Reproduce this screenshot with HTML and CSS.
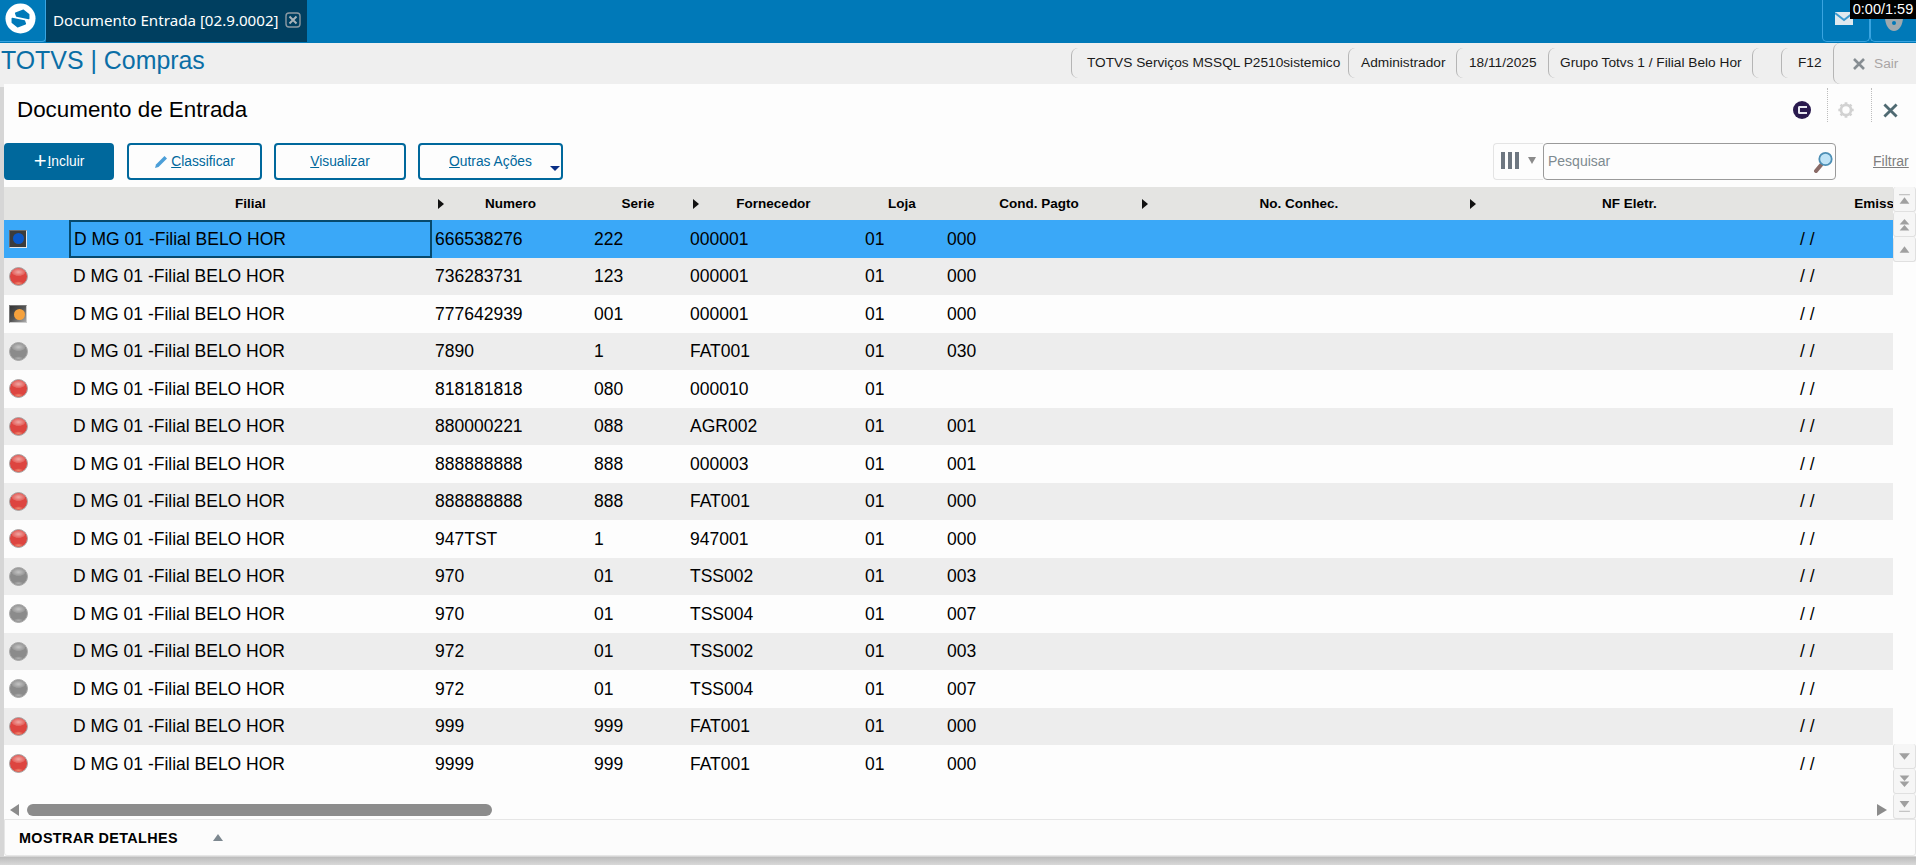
FILE: index.html
```html
<!DOCTYPE html>
<html lang="pt-BR">
<head>
<meta charset="utf-8">
<title>Documento de Entrada</title>
<link rel="stylesheet" href="styles.css">
</head>
<body>
<header class="topbar">
  <div class="logo-box">
    <svg class="logo" viewBox="0 0 32 32"><circle cx="16" cy="16" r="15.5" fill="#fff"/><path d="M11 10.5 L19 7.5 L24.5 12 L24.5 16 L12 13.5 Z" fill="#0079b8" stroke="#0079b8" stroke-width="1.5" stroke-linejoin="round"/><path d="M7.5 16 L20 18.5 L21 21.5 L13 24.5 L7.5 20 Z" fill="#0079b8" stroke="#0079b8" stroke-width="1.5" stroke-linejoin="round"/></svg>
  </div>
  <div class="tab">
    <span class="tab-title">Documento Entrada [02.9.0002]</span>
    <svg class="tab-close" viewBox="0 0 16 16"><rect x="1" y="1" width="14" height="14" rx="3" fill="none" stroke="#8d9aa3" stroke-width="1.4"/><path d="M4.5 4.5 L11.5 11.5 M11.5 4.5 L4.5 11.5" stroke="#a9b4ba" stroke-width="2"/></svg>
  </div>
  <div class="top-actions">
    <div class="top-btn"><svg class="mail" viewBox="0 0 18 13"><rect width="18" height="13" fill="#dfe9ef"/><path d="M0 1 L9 8 L18 1" fill="none" stroke="#3b9ad0" stroke-width="2"/></svg></div>
    <div class="top-btn top-btn-last"><svg class="shield" viewBox="0 0 18 14"><path d="M0 0 H18 C18 8 14 14 9 14 C4 14 0 8 0 0 Z" fill="#9fa9ae"/><circle cx="9" cy="6" r="2" fill="#0079b8"/></svg></div>
  </div>
  <div class="timer">0:00/1:59</div>
</header>

<div class="statusbar">
  <div class="brand">TOTVS | <span>Compras</span></div>
  <div class="st-group">
    <div class="st st-first">TOTVS Serviços MSSQL P2510sistemico</div>
    <div class="st st-admin">Administrador</div>
    <div class="st st-date">18/11/2025</div>
    <div class="st st-group4">Grupo Totvs 1 / Filial Belo Hor</div>
    <div class="st st-empty"></div>
    <div class="st st-f12">F12</div>
    <div class="st st-exit"><svg class="exit-x" viewBox="0 0 12 12"><path d="M1 1 L11 11 M11 1 L1 11" stroke="#868d92" stroke-width="2.6"/></svg><span>Sair</span></div>
  </div>
</div>

<main class="panel">
  <div class="title-row">
    <h1 class="title">Documento de Entrada</h1>
    <div class="title-tools">
      <div class="tool tool-c"><span class="c-badge"><i></i></span></div>
      <div class="tool tool-sep tool-gear">
        <svg class="gear" viewBox="0 0 20 20"><circle cx="10" cy="10" r="5.6" fill="none" stroke="#d2d2d2" stroke-width="3"/><path d="M10 1.5 V4 M10 16 V18.5 M1.5 10 H4 M16 10 H18.5 M4 4 L5.8 5.8 M14.2 14.2 L16 16 M16 4 L14.2 5.8 M5.8 14.2 L4 16" stroke="#d2d2d2" stroke-width="3"/></svg>
      </div>
      <div class="tool tool-sep tool-close">
        <svg class="panel-x" viewBox="0 0 16 16"><path d="M1.5 1.5 L14.5 14.5 M14.5 1.5 L1.5 14.5" stroke="#4f6a72" stroke-width="3"/></svg>
      </div>
    </div>
  </div>

  <div class="toolbar">
    <button class="btn btn-primary"><b class="plus">+</b><span><u>I</u>ncluir</span></button>
    <button class="btn btn-classify"><svg class="pencil" viewBox="0 0 14 14"><path d="M1 13 L2 9.5 L10.5 1 L13 3.5 L4.5 12 Z" fill="#4c9fd8"/></svg><span><u>C</u>lassificar</span></button>
    <button class="btn btn-view"><span><u>V</u>isualizar</span></button>
    <button class="btn btn-more"><span><u>O</u>utras Ações</span><i class="caret"></i></button>
    <div class="search-area">
      <div class="col-picker"><i class="bars"></i><i class="bars"></i><i class="bars"></i><i class="tri-down"></i></div>
      <div class="search">
        <span class="placeholder">Pesquisar</span>
        <svg class="lens" viewBox="0 0 20 22"><path d="M3 20 L8 14" stroke="#8a6a66" stroke-width="4" stroke-linecap="round"/><circle cx="12.5" cy="8" r="6.2" fill="#bfe3f6" stroke="#4d8fb5" stroke-width="1.8"/></svg>
      </div>
      <a class="filter">Filtrar</a>
    </div>
  </div>

  <div class="browse">
    <div class="grid">
      <div class="row head">
        <div></div><div>Filial</div>
        <div><i class="sort"></i>Numero</div><div>Serie</div>
        <div><i class="sort"></i>Fornecedor</div><div>Loja</div><div>Cond. Pagto</div>
        <div><i class="sort"></i>No. Conhec.</div><div><i class="sort"></i>NF Eletr.</div><div>Emissão</div>
      </div>
      <div class="row selected"><div><span class="sq sq-blue"><i></i></span></div><div class="cell-focus">D MG 01 -Filial BELO HOR</div><div>666538276</div><div>222</div><div>000001</div><div>01</div><div>000</div><div></div><div></div><div>/ /</div></div>
      <div class="row alt"><div><span class="ball red"></span></div><div>D MG 01 -Filial BELO HOR</div><div>736283731</div><div>123</div><div>000001</div><div>01</div><div>000</div><div></div><div></div><div>/ /</div></div>
      <div class="row"><div><span class="sq sq-orange"><i></i></span></div><div>D MG 01 -Filial BELO HOR</div><div>777642939</div><div>001</div><div>000001</div><div>01</div><div>000</div><div></div><div></div><div>/ /</div></div>
      <div class="row alt"><div><span class="ball gray"></span></div><div>D MG 01 -Filial BELO HOR</div><div>7890</div><div>1</div><div>FAT001</div><div>01</div><div>030</div><div></div><div></div><div>/ /</div></div>
      <div class="row"><div><span class="ball red"></span></div><div>D MG 01 -Filial BELO HOR</div><div>818181818</div><div>080</div><div>000010</div><div>01</div><div></div><div></div><div></div><div>/ /</div></div>
      <div class="row alt"><div><span class="ball red"></span></div><div>D MG 01 -Filial BELO HOR</div><div>880000221</div><div>088</div><div>AGR002</div><div>01</div><div>001</div><div></div><div></div><div>/ /</div></div>
      <div class="row"><div><span class="ball red"></span></div><div>D MG 01 -Filial BELO HOR</div><div>888888888</div><div>888</div><div>000003</div><div>01</div><div>001</div><div></div><div></div><div>/ /</div></div>
      <div class="row alt"><div><span class="ball red"></span></div><div>D MG 01 -Filial BELO HOR</div><div>888888888</div><div>888</div><div>FAT001</div><div>01</div><div>000</div><div></div><div></div><div>/ /</div></div>
      <div class="row"><div><span class="ball red"></span></div><div>D MG 01 -Filial BELO HOR</div><div>947TST</div><div>1</div><div>947001</div><div>01</div><div>000</div><div></div><div></div><div>/ /</div></div>
      <div class="row alt"><div><span class="ball gray"></span></div><div>D MG 01 -Filial BELO HOR</div><div>970</div><div>01</div><div>TSS002</div><div>01</div><div>003</div><div></div><div></div><div>/ /</div></div>
      <div class="row"><div><span class="ball gray"></span></div><div>D MG 01 -Filial BELO HOR</div><div>970</div><div>01</div><div>TSS004</div><div>01</div><div>007</div><div></div><div></div><div>/ /</div></div>
      <div class="row alt"><div><span class="ball gray"></span></div><div>D MG 01 -Filial BELO HOR</div><div>972</div><div>01</div><div>TSS002</div><div>01</div><div>003</div><div></div><div></div><div>/ /</div></div>
      <div class="row"><div><span class="ball gray"></span></div><div>D MG 01 -Filial BELO HOR</div><div>972</div><div>01</div><div>TSS004</div><div>01</div><div>007</div><div></div><div></div><div>/ /</div></div>
      <div class="row alt"><div><span class="ball red"></span></div><div>D MG 01 -Filial BELO HOR</div><div>999</div><div>999</div><div>FAT001</div><div>01</div><div>000</div><div></div><div></div><div>/ /</div></div>
      <div class="row"><div><span class="ball red"></span></div><div>D MG 01 -Filial BELO HOR</div><div>9999</div><div>999</div><div>FAT001</div><div>01</div><div>000</div><div></div><div></div><div>/ /</div></div>
      <div class="hscroll">
        <i class="arrow-left"></i>
        <div class="thumb"></div>
        <i class="arrow-right"></i>
      </div>
    </div>
    <div class="vscroll">
      <div class="vgroup">
        <div class="vbtn"><svg viewBox="0 0 12 12"><path d="M1 1.5 H11" stroke="#c4c4c4" stroke-width="1.2"/><path d="M1.5 10 L6 4 L10.5 10 Z" fill="#a0a0a0"/></svg></div>
        <div class="vbtn"><svg viewBox="0 0 12 12"><path d="M1.5 6 L6 1 L10.5 6 Z M1.5 11.5 L6 6.5 L10.5 11.5 Z" fill="#a0a0a0"/></svg></div>
        <div class="vbtn"><svg viewBox="0 0 12 12"><path d="M1.5 9 L6 3 L10.5 9 Z" fill="#a0a0a0"/></svg></div>
      </div>
      <div class="vgroup">
        <div class="vbtn"><svg viewBox="0 0 12 12"><path d="M1 3 L11 3 L6 9 Z" fill="#a0a0a0"/></svg></div>
        <div class="vbtn"><svg viewBox="0 0 12 12"><path d="M1.5 .5 L10.5 .5 L6 5.5 Z M1.5 6 L10.5 6 L6 11 Z" fill="#a0a0a0"/></svg></div>
        <div class="vbtn"><svg viewBox="0 0 12 12"><path d="M1.5 1 L10.5 1 L6 7 Z" fill="#a0a0a0"/><path d="M1 10.5 H11" stroke="#c4c4c4" stroke-width="1.2"/></svg></div>
      </div>
    </div>
  </div>

  <div class="details"><strong>MOSTRAR DETALHES</strong><i class="tri-up"></i></div>
</main>
</body>
</html>
```
FILE: styles.css
```css
* { box-sizing: border-box; }
html, body { margin: 0; height: 865px; overflow: hidden; }
body {
  width: 1916px;
  display: flex;
  flex-direction: column;
  font-family: "Liberation Sans", Arial, sans-serif;
  background: linear-gradient(#efefef 0, #efefef 856px, #bcbcbc 857px, #d8d8d8 865px);
  color: #000;
}

/* top bar */
.topbar { position: relative; flex: 0 0 43px; display: flex; background: #0079b8; }
.logo-box {
  width: 46px; height: 42px; display: flex; align-items: flex-start; justify-content: center;
  padding-top: 3px; padding-right: 5px;
  border-right: 1px solid #3aa4e0; border-bottom: 1px solid #3aa4e0; border-bottom-right-radius: 4px;
}
.logo { width: 31px; height: 31px; }
.tab {
  width: 261px; height: 42px; background: #003f60; display: flex; align-items: center;
  padding: 0 0 2px 7px; gap: 6px;
}
.tab-title { font-family: "Noto Sans", sans-serif; font-size: 15.15px; color: #fff; white-space: nowrap; }
.tab-close { width: 16px; height: 16px; flex: none; }
.top-actions { margin-left: auto; display: flex; }
.top-btn {
  width: 48px; height: 42px; border: 1px solid #3aa4e0; border-top: 0; border-radius: 0 0 5px 5px;
  display: flex; justify-content: center; padding-top: 12px;
}
.top-btn-last { width: 46px; border-right: 0; border-radius: 0 0 0 5px; }
.mail { width: 18px; height: 13px; margin-right: 5px; }
.shield { width: 18px; height: 14px; margin-top: 5px; }
.timer {
  position: absolute; right: 0; top: 0; width: 66px; height: 19px; background: #000; color: #fff;
  font-size: 14.5px; line-height: 19px; text-align: center; white-space: nowrap;
}

/* status bar */
.statusbar { flex: 0 0 41px; display: flex; align-items: center; background: #efefef; position: relative; }
.brand { font-size: 24.9px; color: #0a6ea6; padding-left: 1px; white-space: nowrap; padding-bottom: 7px; }
.brand span { color: #0a6ea6; }
.st-group { margin-left: auto; display: flex; align-items: center; height: 41px; }
.st {
  height: 30px; line-height: 30px; padding: 0 12px; font-size: 13.7px; color: #1a1a1a; white-space: nowrap;
  border-left: 1px solid #b5b5b5; border-radius: 7px 0 0 7px; margin-top: -1px;
}
.st-first { padding: 0 0 0 15px; width: 277px; }
.st-admin { width: 108px; padding-right: 0; }
.st-date { width: 92px; padding-right: 0; }
.st-group4 { padding: 0 0 0 11px; width: 204px; }
.st-empty { width: 29px; padding: 0; }
.st-f12 { width: 52px; padding: 0 0 0 16px; }
.st-exit {
  width: 83px; height: 41px; line-height: 41px; margin-top: 0; padding: 0 0 0 19px; color: #aaa5a5;
  display: flex; align-items: center; gap: 9px;
}
.exit-x { width: 12px; height: 12px; }

/* panel */
.panel { flex: 1; margin-left: 4px; display: flex; flex-direction: column; background: #fdfdfd; position: relative; margin-bottom: 9px; }
.panel::before { content: ""; position: absolute; left: -4px; top: 3px; bottom: 0; width: 4px; background: #d6d6d6; }
.title-row { flex: 0 0 59px; display: flex; align-items: flex-start; justify-content: space-between; }
.title { margin: 13px 0 0 13px; font-size: 22.4px; font-weight: 400; line-height: 26px; }
.title-tools { display: flex; margin-top: 4px; height: 34px; }
.tool { display: flex; align-items: center; justify-content: center; padding-top: 10px; }
.tool-c { width: 40px; padding-right: 16px; justify-content: flex-end; }
.tool-sep { border-left: 1px dotted #bdbdbd; }
.tool-gear { width: 44px; padding-right: 8px; }
.tool-close { width: 45px; padding-right: 7px; }
.c-badge { width: 18px; height: 18px; border-radius: 50%; background: #2a1a4e; position: relative; display: block; }
.c-badge i { position: absolute; left: 5px; top: 5px; width: 9px; height: 8px; border: 2px solid #e8e8f0; border-right: 0; border-radius: 2px 0 0 2px; }
.gear { width: 18px; height: 18px; }
.panel-x { width: 15px; height: 15px; }

.toolbar { flex: 0 0 37px; display: flex; margin-bottom: 7px; }
.btn {
  height: 37px; border: 2px solid #00689c; border-radius: 4px; background: #fdfdfd; color: #00689c;
  font: 13.8px "Liberation Sans", Arial, sans-serif; padding: 0; display: flex; align-items: center; justify-content: center;
  position: relative;
}
.btn u { text-decoration: underline; }
.btn-primary { width: 110px; background: #00689c; color: #fff; gap: 1px; }
.plus { font-size: 22px; font-weight: 400; line-height: 20px; margin-top: -2px; }
.btn-classify { width: 135px; margin-left: 13px; gap: 3px; }
.pencil { width: 14px; height: 14px; }
.btn-view { width: 132px; margin-left: 12px; }
.btn-more { width: 145px; margin-left: 12px; }
.caret {
  position: absolute; right: 1px; bottom: 7px; width: 0; height: 0;
  border-left: 5px solid transparent; border-right: 5px solid transparent; border-top: 5px solid #0a2f86;
}
.search-area { margin-left: auto; display: flex; }
.col-picker {
  width: 50px; height: 37px; border: 1px solid #e4e4e4; border-right: 0; border-radius: 4px 0 0 4px;
  display: flex; align-items: flex-start; padding: 8px 0 0 7px; gap: 3px;
}
.bars { width: 4px; height: 17px; background: #6d7680; }
.tri-down {
  margin: 5px 0 0 6px; width: 0; height: 0;
  border-left: 4px solid transparent; border-right: 4px solid transparent; border-top: 7px solid #8b8b8b;
}
.search {
  width: 293px; height: 37px; border: 1px solid #9a9a9a; border-radius: 4px;
  display: flex; align-items: center; justify-content: space-between; padding: 0 2px 0 4px; font-size: 14px; color: #7d8a90;
}
.placeholder { padding-bottom: 2px; }
.lens { width: 20px; height: 22px; }
.filter { margin-left: 37px; width: 43px; font-size: 14px; color: #7f7f7f; text-decoration: underline; line-height: 37px; }

/* browse */
.browse { flex: 0 0 632px; display: flex; }
.grid { width: 1889px; overflow: hidden; display: flex; flex-direction: column; }
.row {
  display: grid; flex: 0 0 37.5px;
  grid-template-columns: 66px 361px 159px 96px 175px 82px 192px 328px 333px 172px;
  width: 2164px; font-size: 17.5px; align-items: center; white-space: nowrap;
}
.row > div { padding: 1px 0 0 4px; position: relative; display: flex; align-items: center; height: 100%; overflow: hidden; }
.row > div:first-child { padding: 0 0 0 5px; }
.row > div:nth-child(2) { padding-left: 3px; }
.alt { background: #ededed; }
.selected { background: #3aa8f8; }
.row > .cell-focus { border: 2px solid #064a6e; padding-left: 5px; margin: 0 -1px; }
.head { flex: 0 0 33px; background: #e4e4e2; font-size: 13.5px; font-weight: 700; }
.row.head > div { justify-content: center; padding: 0; }
.sort {
  position: absolute; left: 7px; top: 12px; width: 0; height: 0;
  border-top: 5px solid transparent; border-bottom: 5px solid transparent; border-left: 6px solid #111;
}
.ball { display: block; width: 19px; height: 19px; border-radius: 50%; border: 1px solid #a9a9a9; }
.red { background: radial-gradient(ellipse 7px 4px at 50% 24%, #f0a8a4 0, #e4635e 90%, transparent 100%), radial-gradient(ellipse 5px 2px at 50% 90%, #f08a6e 0, transparent 100%), #dd4540; }
.gray { background: radial-gradient(ellipse 7px 4px at 50% 24%, #c4c4c4 0, #9a9a9a 90%, transparent 100%), radial-gradient(ellipse 5px 2px at 50% 90%, #b0b0b0 0, transparent 100%), #8b8b8b; }
.sq {
  display: flex; align-items: center; justify-content: center; width: 18px; height: 18px;
  background: #3c3c3c; border: 1px solid; border-color: #6a6a6a #e6e6e6 #e6e6e6 #6a6a6a;
}
.sq i { display: block; width: 11px; height: 11px; border-radius: 50%; }
.sq-blue i { background: #0b58c8; }
.sq-orange i { background: #f5a13c; margin: 2px 0 0 2px; }
.sq-orange { background: linear-gradient(135deg, #333 0, #555 50%, #aaa 100%); border-color: #777 #ccc #ccc #777; }

.hscroll { flex: 1; position: relative; display: flex; align-items: flex-start; padding: 21px 0 0 6px; }
.thumb { width: 465px; height: 12px; border-radius: 6px; background: #8c8c8c; margin-left: 8px; }
.arrow-left, .arrow-right { width: 0; height: 0; border-top: 6px solid transparent; border-bottom: 6px solid transparent; }
.arrow-left { border-right: 9px solid #8c8c8c; }
.arrow-right { border-left: 10px solid #8c8c8c; margin-left: auto; margin-right: 6px; }

.vscroll { flex: 0 0 23px; display: flex; flex-direction: column; justify-content: space-between; }
.vgroup { display: flex; flex-direction: column; }
.vbtn {
  height: 25px; background: #f6f6f6; border: 1px solid #e0e0e0; border-top: 0; border-radius: 3px;
  display: flex; align-items: center; justify-content: center;
}
.vbtn svg { width: 13px; height: 13px; }

.details {
  flex: 0 0 37px; display: flex; align-items: center; padding-left: 14px; border: 1px solid #e6e6e6;
  border-radius: 0 0 3px 3px; background: #fcfcfc; font-size: 14.4px; letter-spacing: .35px;
}
.tri-up {
  margin-left: 35px; width: 0; height: 0;
  border-left: 5px solid transparent; border-right: 5px solid transparent; border-bottom: 7px solid #7d8890;
}
```
